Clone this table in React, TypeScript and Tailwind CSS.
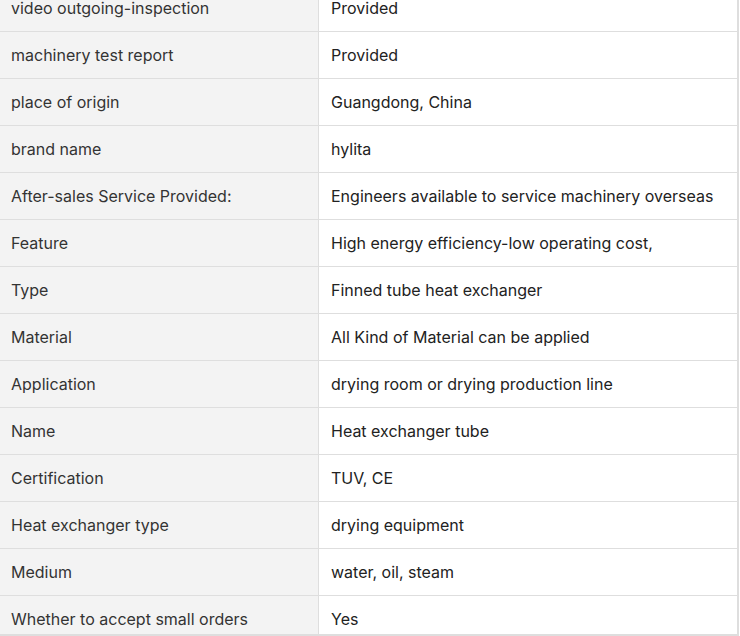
import React from "react";

const rows: [string, string][] = [
  ["video outgoing-inspection", "Provided"],
  ["machinery test report", "Provided"],
  ["place of origin", "Guangdong, China"],
  ["brand name", "hylita"],
  ["After-sales Service Provided:", "Engineers available to service machinery overseas"],
  ["Feature", "High energy efficiency-low operating cost,"],
  ["Type", "Finned tube heat exchanger"],
  ["Material", "All Kind of Material can be applied"],
  ["Application", "drying room or drying production line"],
  ["Name", "Heat exchanger tube"],
  ["Certification", "TUV, CE"],
  ["Heat exchanger type", "drying equipment"],
  ["Medium", "water, oil, steam"],
  ["Whether to accept small orders", "Yes"],
];

const App: React.FC = () => {
  return (
    <div
      className="w-[739px] h-[636px] overflow-hidden bg-white border-r-2 border-b-2 border-[#dedede]"
      style={{ fontFamily: "Inter, 'Noto Sans', sans-serif" }}
    >
      <div className="-mt-[16px]">
        {rows.map(([label, value], i) => (
          <div
            key={i}
            className={`flex h-[47px] ${i > 0 ? "border-t border-[#dedede]" : ""}`}
          >
            <div className="w-[319px] shrink-0 bg-[#f3f3f3] border-r border-[#dedede] flex items-center pl-[11px] text-[16px] text-[#333]">
              {label}
            </div>
            <div className="flex-1 flex items-center pl-[12px] text-[16px] text-[#222]">
              {value}
            </div>
          </div>
        ))}
      </div>
    </div>
  );
};

export default App;
